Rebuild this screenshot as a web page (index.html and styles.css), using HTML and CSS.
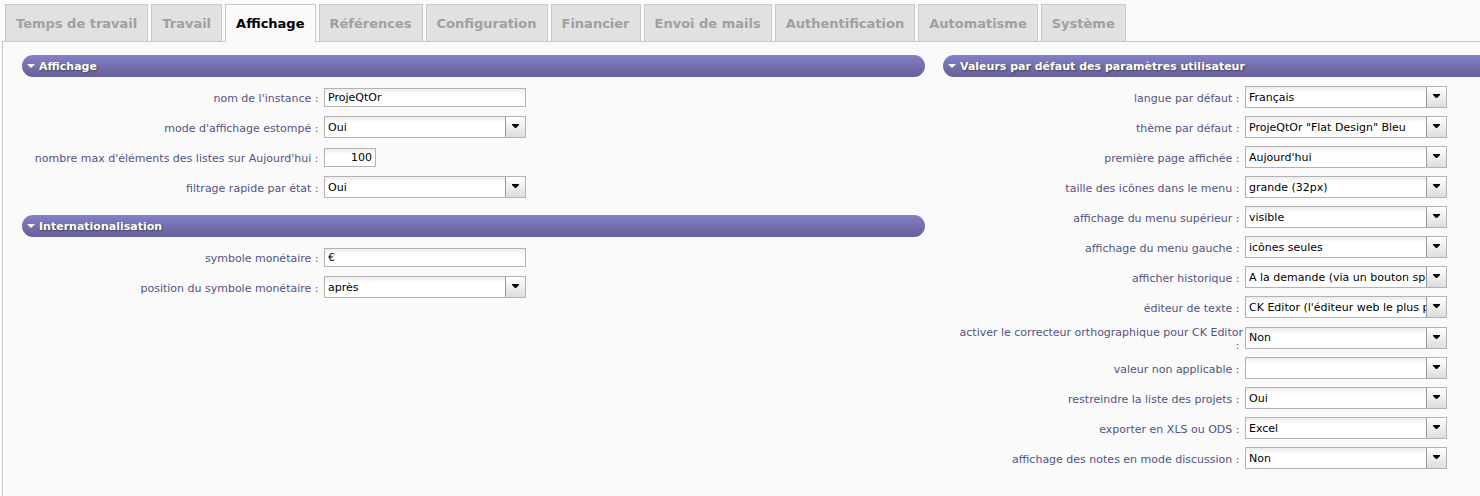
FILE: index.html
```html
<!DOCTYPE html>
<html lang="fr">
<head>
<meta charset="utf-8">
<meta name="viewport" content="width=device-width, initial-scale=1">
<title>Paramètres globaux</title>
<link rel="stylesheet" href="styles.css">
</head>
<body>
<div class="tabs" role="tablist">
  <button class="tab" type="button" role="tab">Temps de travail</button>
  <button class="tab" type="button" role="tab">Travail</button>
  <button class="tab tab-active" type="button" role="tab" aria-selected="true">Affichage</button>
  <button class="tab" type="button" role="tab">Références</button>
  <button class="tab" type="button" role="tab">Configuration</button>
  <button class="tab" type="button" role="tab">Financier</button>
  <button class="tab" type="button" role="tab">Envoi de mails</button>
  <button class="tab" type="button" role="tab">Authentification</button>
  <button class="tab" type="button" role="tab">Automatisme</button>
  <button class="tab" type="button" role="tab">Système</button>
</div>
<main class="panel">
  <div class="column">
    <section class="section">
      <h2 class="heading"><button class="toggle" type="button" aria-expanded="true"><svg class="twisty" viewBox="0 0 8 4"><path d="M0 0h8L4 4z"/></svg>Affichage</button></h2>
      <div class="rows">
        <div class="row"><label class="label" for="instance">nom de l'instance :&nbsp;</label><input class="field" id="instance" type="text" value="ProjeQtOr"></div>
        <div class="row"><label class="label" for="fading">mode d'affichage estompé :&nbsp;</label><select class="field select" id="fading"><option>Oui</option><option>Non</option></select></div>
        <div class="row"><label class="label" for="maxitems">nombre max d'éléments des listes sur Aujourd'hui :&nbsp;</label><input class="field number" id="maxitems" type="text" inputmode="numeric" value="100"></div>
        <div class="row"><label class="label" for="filter">filtrage rapide par état :&nbsp;</label><select class="field select" id="filter"><option>Oui</option><option>Non</option></select></div>
      </div>
    </section>
    <section class="section">
      <h2 class="heading"><button class="toggle" type="button" aria-expanded="true"><svg class="twisty" viewBox="0 0 8 4"><path d="M0 0h8L4 4z"/></svg>Internationalisation</button></h2>
      <div class="rows">
        <div class="row"><label class="label" for="currency">symbole monétaire :&nbsp;</label><input class="field" id="currency" type="text" value="€"></div>
        <div class="row"><label class="label" for="position">position du symbole monétaire :&nbsp;</label><select class="field select" id="position"><option>après</option><option>avant</option></select></div>
      </div>
    </section>
  </div>
  <div class="column">
    <section class="section">
      <h2 class="heading heading-open"><button class="toggle" type="button" aria-expanded="true"><svg class="twisty" viewBox="0 0 8 4"><path d="M0 0h8L4 4z"/></svg>Valeurs par défaut des paramètres utilisateur</button></h2>
      <div class="rows">
        <div class="row"><label class="label" for="lang">langue par défaut :&nbsp;</label><select class="field select" id="lang"><option>Français</option></select></div>
        <div class="row"><label class="label" for="theme">thème par défaut :&nbsp;</label><select class="field select" id="theme"><option>ProjeQtOr "Flat Design" Bleu</option></select></div>
        <div class="row"><label class="label" for="first">première page affichée :&nbsp;</label><select class="field select" id="first"><option>Aujourd'hui</option></select></div>
        <div class="row"><label class="label" for="icons">taille des icônes dans le menu :&nbsp;</label><select class="field select" id="icons"><option>grande (32px)</option></select></div>
        <div class="row"><label class="label" for="topmenu">affichage du menu supérieur :&nbsp;</label><select class="field select" id="topmenu"><option>visible</option></select></div>
        <div class="row"><label class="label" for="leftmenu">affichage du menu gauche :&nbsp;</label><select class="field select" id="leftmenu"><option>icônes seules</option></select></div>
        <div class="row"><label class="label" for="history">afficher historique :&nbsp;</label><select class="field select" id="history"><option>A la demande (via un bouton spécifique)</option></select></div>
        <div class="row"><label class="label" for="editor">éditeur de texte :&nbsp;</label><select class="field select" id="editor"><option>CK Editor (l'éditeur web le plus populaire)</option></select></div>
        <div class="row"><label class="label" for="spell">activer le correcteur orthographique pour CK Editor<br>:&nbsp;</label><select class="field select" id="spell"><option>Non</option><option>Oui</option></select></div>
        <div class="row"><label class="label" for="na">valeur non applicable :&nbsp;</label><select class="field select" id="na"><option></option></select></div>
        <div class="row"><label class="label" for="restrict">restreindre la liste des projets :&nbsp;</label><select class="field select" id="restrict"><option>Oui</option><option>Non</option></select></div>
        <div class="row"><label class="label" for="export">exporter en XLS ou ODS :&nbsp;</label><select class="field select" id="export"><option>Excel</option></select></div>
        <div class="row"><label class="label" for="notes">affichage des notes en mode discussion :&nbsp;</label><select class="field select" id="notes"><option>Non</option><option>Oui</option></select></div>
      </div>
    </section>
  </div>
</main>
</body>
</html>
```
FILE: styles.css
```css
* { box-sizing: border-box; }

body {
  display: flex;
  flex-direction: column;
  min-height: 100vh;
  margin: 0;
  padding: 4px 0 0 2px;
  background: #fafafa;
  color: #000;
  font-family: Verdana, "DejaVu Sans", sans-serif;
  font-size: 11px;
}

.tabs {
  display: flex;
  gap: 3px;
  padding-left: 3px;
}

.tab {
  height: 37px;
  padding: 0 10px;
  border: 1px solid #c8c8c8;
  border-bottom: 0;
  background: #e1e1e1;
  color: #a0a0a0;
  font: bold 13px Verdana, "DejaVu Sans", sans-serif;
  white-space: nowrap;
}

.tab-active {
  position: relative;
  height: 38px;
  margin-bottom: -1px;
  background: #fafafa;
  color: #000;
}

.panel {
  display: grid;
  flex: 1;
  grid-template-columns: minmax(0, 903fr) minmax(0, 537fr);
  gap: 18px;
  padding: 13px 0 0 19px;
  border: solid #c8c8c8;
  border-width: 1px 0 0 1px;
}

.column {
  display: flex;
  flex-direction: column;
  gap: 13px;
}

.heading {
  margin: 0;
  border-radius: 11px;
  background: linear-gradient(#8681c8, #656096);
}

.heading-open { border-radius: 11px 0 0 11px; }

.toggle {
  display: flex;
  align-items: center;
  gap: 4px;
  width: 100%;
  height: 22px;
  padding: 0 5px;
  border: 0;
  background: none;
  color: #fff;
  font: bold 11px Verdana, "DejaVu Sans", sans-serif;
  text-shadow: 1px 1px 2px #444;
}

.twisty {
  width: 8px;
  height: 4px;
  fill: #fff;
}

.rows { padding-top: 5px; }

.row {
  display: grid;
  grid-template-columns: 300px 202px;
  align-items: center;
  column-gap: 2px;
  min-height: 30px;
}

.label {
  padding: 4px 0 1px;
  color: #545381;
  line-height: 13px;
  text-align: right;
}

.field {
  width: 100%;
  height: 19px;
  padding: 0 3px;
  border: 1px solid #b3b3b3;
  border-radius: 0;
  background: #fff linear-gradient(#ececec, #fff) 0 0 / 100% 6px no-repeat;
  color: #000;
  font: 11px Verdana, "DejaVu Sans", sans-serif;
}

.number {
  width: 52px;
  text-align: right;
}

.select {
  height: 22px;
  padding: 0 20px 0 3px;
  appearance: none;
  background:
    url("data:image/svg+xml,%3Csvg xmlns='http://www.w3.org/2000/svg' width='7' height='4'%3E%3Cpath d='M0 0h7v1L4 4H3L0 1z'/%3E%3C/svg%3E") right 6px top 7px no-repeat,
    linear-gradient(#999, #999) right 19px top 0 / 1px 100% no-repeat,
    linear-gradient(#fff, #ddd) right 0 top 0 / 19px 100% no-repeat,
    linear-gradient(#ececec, #fff) 0 0 / 100% 6px no-repeat,
    #fff;
}
```
